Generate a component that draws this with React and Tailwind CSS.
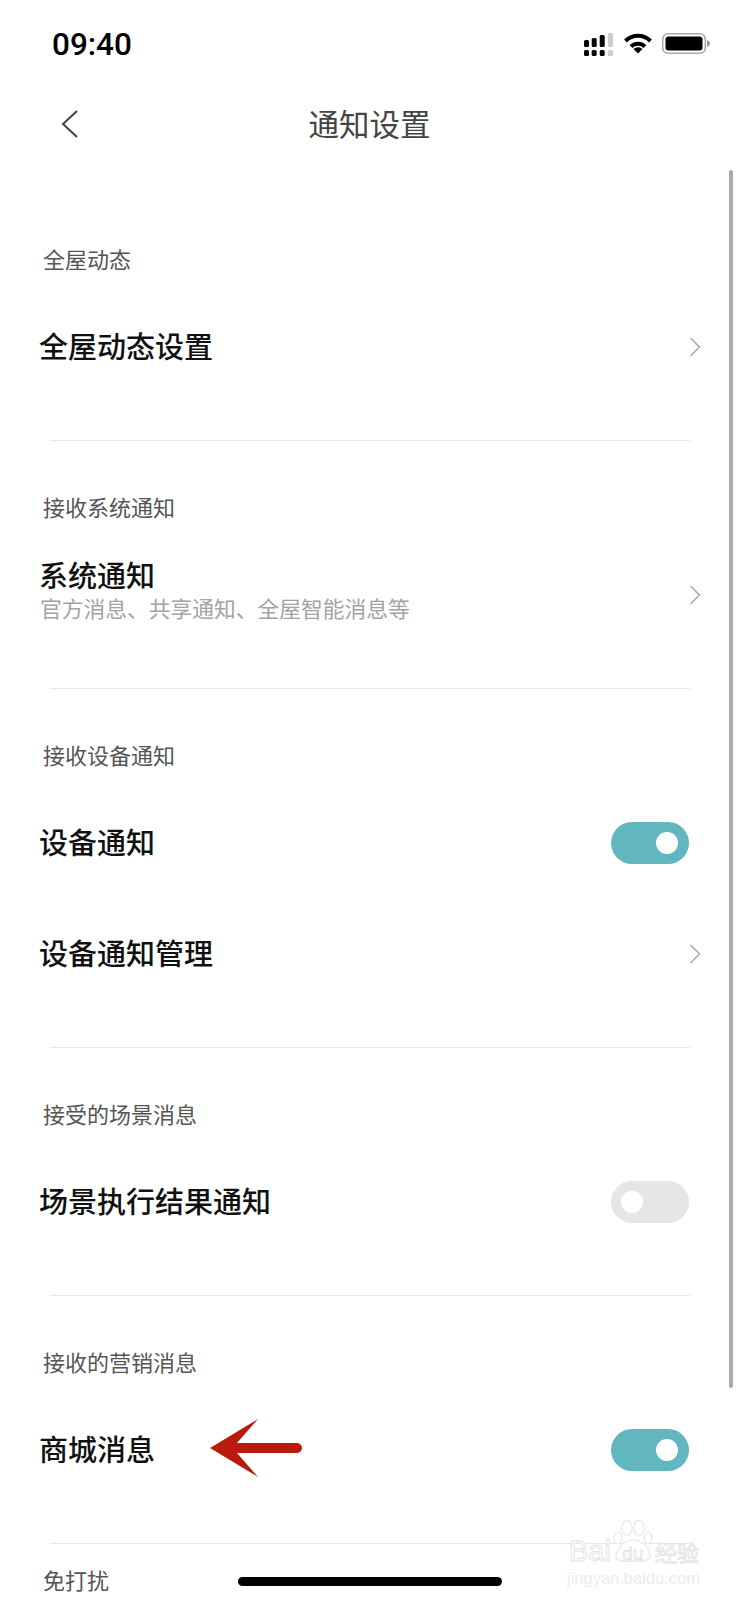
import React from 'react';

const Chevron = () => (
  <svg width="12" height="20" viewBox="0 0 12 20" fill="none" stroke="#a8a8a8" strokeWidth="1.5" className="mr-[38px] shrink-0">
    <path d="M1.5 1 L10.5 10 L1.5 19" />
  </svg>
);

const Toggle = ({ on }) => (
  <div className={`mr-[50px] w-[78px] h-[42px] rounded-full flex items-center ${on ? 'bg-[#61b6bf] justify-end pr-[11px]' : 'bg-[#e6e6e6] justify-start pl-[10px]'}`}>
    <div className="w-[22px] h-[22px] rounded-full bg-white" />
  </div>
);

const Row = ({ title, sub, right }) => (
  <div className="h-[111px] pl-[39px] flex items-center justify-between">
    <div className={sub ? 'pb-[8px]' : 'pb-[4px]'}>
      <div className="text-[29px] leading-[34px] font-medium text-[#111]">{title}</div>
      {sub && <div className="pl-[1px] text-[21.75px] leading-[34px] text-[#a3a3a3]">{sub}</div>}
    </div>
    {right === 'chevron' && <Chevron />}
    {right === 'on' && <Toggle on />}
    {right === 'off' && <Toggle />}
  </div>
);

const Section = ({ label, rows, last }) => (
  <section>
    <div className={`pl-[43px] text-[22px] leading-[38px] text-[#555] ${last ? 'pt-[16px]' : 'pt-[46px]'}`}>{label}</div>
    {rows && <div className="mt-[14px]">{rows.map((r) => <Row key={r.title} {...r} />)}</div>}
    {!last && <div className="mt-[38px] ml-[50px] w-[640px] h-px bg-[#e8e8e8]" />}
  </section>
);

const sections = [
  { label: '全屋动态', rows: [{ title: '全屋动态设置', right: 'chevron' }] },
  { label: '接收系统通知', rows: [{ title: '系统通知', sub: '官方消息、共享通知、全屋智能消息等', right: 'chevron' }] },
  { label: '接收设备通知', rows: [{ title: '设备通知', right: 'on' }, { title: '设备通知管理', right: 'chevron' }] },
  { label: '接受的场景消息', rows: [{ title: '场景执行结果通知', right: 'off' }] },
  { label: '接收的营销消息', rows: [{ title: '商城消息', right: 'on' }] },
  { label: '免打扰', last: true },
];

const StatusIcons = () => (
  <div className="flex items-start gap-[11px]">
    <svg width="29" height="23" viewBox="0 0 29 23">
      <rect x="0" y="7" width="5" height="7" rx="1.5" fill="#000" />
      <rect x="7.7" y="5" width="5" height="9" rx="1.5" fill="#000" />
      <rect x="15.7" y="2" width="5" height="12" rx="1.5" fill="#000" />
      <rect x="24" y="0" width="5" height="14" rx="1" fill="#ccc" />
      <rect x="0" y="17" width="5" height="6" rx="1.5" fill="#000" />
      <rect x="7.7" y="17" width="5" height="6" rx="1.5" fill="#000" />
      <rect x="15.7" y="17" width="5" height="6" rx="1.5" fill="#000" />
      <rect x="24" y="17" width="5" height="6" rx="1" fill="#ccc" />
    </svg>
    <svg width="28" height="21" viewBox="0 0 28 21" fill="none" stroke="#000" strokeWidth="4">
      <path d="M1.5 8 C8.5 1 19.5 1 26.5 8" />
      <path d="M7 13.5 C11 9.7 17 9.7 21 13.5" />
      <path d="M9.5 16 L14 20.5 L18.5 16 C15.5 13.7 12.5 13.7 9.5 16 Z" fill="#000" stroke="none" />
    </svg>
    <svg width="48" height="21" viewBox="0 0 48 21" className="-ml-[1px]">
      <rect x="0.75" y="0.75" width="42.5" height="19.5" rx="5" fill="none" stroke="#a9a9a9" strokeWidth="1.5" />
      <rect x="3.5" y="3.5" width="37" height="14" rx="3" fill="#000" />
      <path d="M45 7 C47 8 48 9 48 10.5 C48 12 47 13 45 14 Z" fill="#999" />
    </svg>
  </div>
);

const Watermark = () => (
  <div className="absolute left-[567px] top-[1520px] w-[134px] flex flex-col text-[#ececec] font-['Liberation_Sans',sans-serif]">
    <div className="flex items-end h-[43px]">
      <span className="ml-[2px] text-[29px] leading-[24px] text-white [-webkit-text-stroke:1px_#e4e4e4]">Bai</span>
      <div className="relative w-[42px] h-[43px] ml-[1px]">
        <svg width="42" height="43" viewBox="0 0 42 43" fill="#fff" stroke="#e6e6e6" strokeWidth="1.2">
          <ellipse cx="6" cy="18" rx="4" ry="6" />
          <ellipse cx="15" cy="8" rx="5" ry="7.5" />
          <ellipse cx="27" cy="8" rx="5" ry="7.5" />
          <ellipse cx="36" cy="18" rx="4" ry="6" />
          <path d="M4 35 C6 26 13 20 21 20 C29 20 36 26 38 35 C39 41 30 42 21 41 C12 42 3 41 4 35 Z" />
        </svg>
        <span className="absolute inset-x-0 bottom-[1px] text-center text-[19px] leading-[16px] text-white [-webkit-text-stroke:0.8px_#e0e0e0]">du</span>
      </div>
      <span className="ml-[1px] text-[22px] leading-[24px] text-white [-webkit-text-stroke:0.8px_#e0e0e0] font-['Noto_Sans_CJK_SC',sans-serif]">经验</span>
    </div>
    <div className="mt-[5px] text-[16.5px] leading-[20px] whitespace-nowrap">jingyan.baidu.com</div>
  </div>
);

export default function App() {
  return (
    <div className="relative w-[739px] h-[1600px] overflow-hidden bg-white font-['Noto_Sans_CJK_SC',sans-serif]">
      <div className="h-[88px] pl-[52px] pr-[29px] pt-[33px] flex justify-between items-start">
        <span className="font-['Roboto',sans-serif] font-medium text-[31.5px] leading-[24px] text-black">09:40</span>
        <StatusIcons />
      </div>
      <div className="h-[74px] grid grid-cols-[1fr_auto_1fr] items-center">
        <svg width="18" height="28" viewBox="0 0 18 28" fill="none" stroke="#444" strokeWidth="2" className="ml-[61px] -mt-[2px]">
          <path d="M16 1 L2 14 L16 27" />
        </svg>
        <h1 className="text-[30.5px] leading-[40px] text-[#444] pb-[4px]">通知设置</h1>
      </div>
      <div className="pt-[31px]">
        {sections.map((s) => <Section key={s.label} {...s} />)}
      </div>

      {/* scrollbar */}
      <div className="absolute left-[729px] top-[170px] w-[4px] h-[1218px] bg-[#aaa] rounded-full" />
      {/* annotation arrow */}
      <svg width="92" height="58" viewBox="0 0 92 58" className="absolute left-[210px] top-[1419px]">
        <path d="M0 29 L48 0 L27 24 L87 24 A5 5 0 0 1 87 34 L27 34 L48 58 Z" fill="#b91c0c" />
      </svg>
      <Watermark />
      {/* home indicator */}
      <div className="absolute left-[238px] top-[1577px] w-[264px] h-[9px] rounded-full bg-black" />
    </div>
  );
}
